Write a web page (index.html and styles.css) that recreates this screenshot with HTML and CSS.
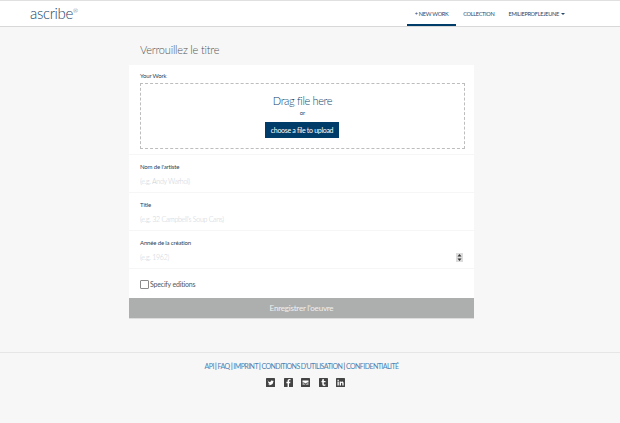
FILE: index.html
```html
<!DOCTYPE html>
<html lang="fr">
<head>
<meta charset="utf-8">
<title>ascribe</title>
<link rel="stylesheet" href="styles.css">
</head>
<body>
<header class="topbar">
  <a class="logo">ascribe<sup class="reg">®</sup></a>
  <nav class="nav">
    <a class="nav-item active">+ NEW WORK</a>
    <a class="nav-item">COLLECTION</a>
    <a class="nav-item">EMILIEPROFLEJEUNE <span class="caret"></span></a>
  </nav>
</header>
<main class="main">
  <h1 class="page-title">Verrouillez le titre</h1>
  <form class="card">
    <section class="field upload-field">
      <div class="label">Your Work</div>
      <div class="dropzone">
        <div class="drag">Drag file here</div>
        <div class="or">or</div>
        <button type="button" class="choose">choose a file to upload</button>
      </div>
    </section>
    <section class="field">
      <div class="label">Nom de l'artiste</div>
      <div class="placeholder">(e.g. Andy Warhol)</div>
    </section>
    <section class="field">
      <div class="label">Title</div>
      <div class="placeholder">(e.g. 32 Campbell's Soup Cans)</div>
    </section>
    <section class="field">
      <div class="label">Année de la création</div>
      <div class="placeholder-row">
        <div class="placeholder">(e.g. 1962)</div>
        <svg class="spinner" width="7" height="9" viewBox="0 0 7 9"><rect width="7" height="9" fill="#dcdcdc"/><path d="M3.5 1 5.500 3.600h-4zM3.5 8 1.500 5.400h4z" fill="#333"/></svg>
      </div>
    </section>
    <label class="editions"><span class="box"></span><span>Specify editions</span></label>
    <button type="button" class="submit">Enregistrer l'oeuvre</button>
  </form>
</main>
<footer class="footer">
  <p class="links"><a>API</a> | <a>FAQ</a> | <a>IMPRINT</a> | <a>CONDITIONS D'UTILISATION</a> | <a>CONFIDENTIALITÉ</a></p>
  <div class="social">
    <svg class="icon" viewBox="0 0 9 9"><rect width="9" height="9" rx=".6" fill="#444"/><path d="M1.600 2.700c1 .9 1.800 1.300 2.900 1.400-.2-1.500 1.500-2 2.300-1.100l.8-.3-.4.8.6-.1-.6.7c0 2.200-2.600 3.900-5.300 2.600 1 0 1.500-.2 2-.6-.8-.1-1.200-.5-1.400-1h.6c-.8-.3-1.100-.8-1.100-1.400l.6.100c-.7-.6-.7-1.300-.4-1.900z" fill="#fff"/></svg>
    <svg class="icon" viewBox="0 0 9 9"><rect width="9" height="9" rx=".6" fill="#444"/><path d="M5 9V5.200h1.200l.2-1.400H5V3c0-.4.100-.7.700-.7h.8V1.100C6.300 1 5.900 1 5.400 1 4.300 1 3.600 1.700 3.600 2.800v1H2.400v1.400h1.200V9z" fill="#fff"/></svg>
    <svg class="icon" viewBox="0 0 9 9"><rect width="9" height="9" rx=".6" fill="#444"/><path d="M1.500 2.500h6v2h-1.500l-1.500 1-1.500-1h-1.500zM1.500 5.500h1.500l1.500 1 1.500-1h1.500v1h-6z" fill="#fff"/></svg>
    <svg class="icon" viewBox="0 0 9 9"><rect width="9" height="9" rx=".6" fill="#444"/><path d="M3.500 1h1.300v1.900h1.700v1.300H4.800v1.700c0 .7.700.8 1.700.4v1.300C4.800 8.300 3.300 7.800 3.300 6.300V4.200H2.400V3.200c.7-.3 1-1.100 1.100-2.200z" fill="#fff"/></svg>
    <svg class="icon" viewBox="0 0 9 9"><rect width="9" height="9" rx=".6" fill="#444"/><path d="M1.500 3.500h1.300v4H1.500zM1.500 1.700h1.300V3H1.500zM3.700 3.500h1.200v.6c.6-1 2.700-1 2.700 1v2.400H6.300V5.400c0-1-1.300-1-1.300 0v2.100H3.700z" fill="#fff"/></svg>
  </div>
</footer>
</body>
</html>
```
FILE: styles.css
```css
* { box-sizing: border-box; }
html, body { margin: 0; height: 423px; overflow: hidden; }
body { background: #f7f7f7; font-family: Lato, "Open Sans", sans-serif; color: #003c69; }
.topbar {
  height: 27px;
  background: #fff;
  border-top: 1px solid #e0e0e0;
  border-bottom: 1px solid #d8d8d8;
  display: flex;
  justify-content: space-between;
  padding: 0 48px 0 30px;
}
.logo { font-size: 15px; font-weight: 300; color: #1d4568; line-height: 25px; letter-spacing: -0.35px; }
.reg { font-size: 6px; line-height: 0; vertical-align: 6px; }
.nav { display: flex; gap: 0; }
.nav-item { font-size: 5.600px; line-height: 25px; padding: 0 7px; color: #29476a; font-weight: 400; letter-spacing: -0.3px; white-space: nowrap; }
.nav-item.active { border-bottom: 2px solid #003c69; height: 25px; width: 49px; padding: 0; text-align: center; }
.caret { display: inline-block; vertical-align: 1px; margin-left: 1px; border-top: 2px solid #29476a; border-left: 2px solid transparent; border-right: 2px solid transparent; }
.main { width: 345px; margin-left: 129px; }
.page-title { margin: 0; padding: 15px 0 0 11px; height: 38px; font-size: 11px; line-height: 16px; font-weight: 300; color: #555; letter-spacing: -0.2px; }
.card { background: #fff; display: flex; flex-direction: column; }
.field { padding: 8px 11px 0; height: 38px; border-bottom: 1px solid #f6f6f6; }
.upload-field { height: 90px; padding-top: 7px; }
.label { font-size: 6px; line-height: 8px; color: #2a3f57; letter-spacing: -0.15px; }
.dropzone {
  margin-top: 3px;
  width: 325px;
  height: 66px;
  border: 1px dashed #bdbdbd;
  display: flex;
  flex-direction: column;
  align-items: center;
  padding-top: 10px;
}
.drag { font-size: 11px; line-height: 14px; color: #0f3f6b; font-weight: 300; letter-spacing: -0.35px; }
.or { font-size: 6px; line-height: 8px; margin-top: 1px; color: #2a3f57; }
.choose {
  margin-top: 5px;
  margin-right: 1px;
  width: 74px;
  height: 16px;
  padding: 0;
  border: 0;
  background: #003c69;
  color: #fff;
  font: 400 7px/16px Lato, sans-serif;
  letter-spacing: -0.3px;
}
.placeholder { font-size: 7px; line-height: 10px; margin-top: 5px; color: #c6cfd8; font-weight: 300; letter-spacing: -0.28px; }
.placeholder-row { display: flex; justify-content: space-between; align-items: flex-end; }
.spinner { display: block; }
.editions { height: 29px; display: flex; align-items: center; gap: 1px; padding: 1px 11px 0; font-size: 7px; color: #4d5866; letter-spacing: -0.2px; }
.box { width: 9px; height: 9px; border: 1px solid #8a8a8a; border-radius: 1px; }
.submit {
  height: 21px;
  border: 0;
  border-bottom: 1px solid #ddd;
  background: #adafae;
  color: #f0f0f0;
  font: 400 8px/20px Lato, sans-serif;
  letter-spacing: -0.2px;
  padding: 0;
}
.footer { margin-top: 33px; width: 620px; border-top: 1px solid #e6e6e6; text-align: center; padding-right: 17px; }
.links { margin: 8px 0 0; font-size: 7px; line-height: 10px; color: #333; letter-spacing: -0.55px; }
.links a { color: #4a82b4; }
.social { display: flex; justify-content: center; gap: 8.500px; margin-top: 7px; padding-left: 8px; }
.icon { width: 9px; height: 9px; display: block; }
```
